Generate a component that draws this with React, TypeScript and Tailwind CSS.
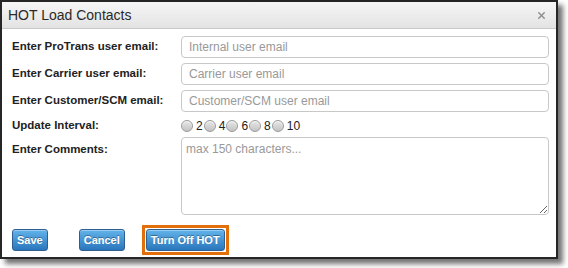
import { X } from "lucide-react";

const font = { fontFamily: '"Liberation Sans", Arial, sans-serif' };

function Field({ label, placeholder }: { label: string; placeholder: string }) {
  return (
    <div className="flex items-center h-[22px] mb-[5px]">
      <label className="w-[169px] shrink-0 text-[11.5px] font-bold text-[#222]">{label}</label>
      <input
        placeholder={placeholder}
        className="flex-1 h-[22px] rounded-[4px] border border-[#c8c8c8] bg-white px-[7px] text-[12px] text-[#333] placeholder:text-[#999] outline-none"
      />
    </div>
  );
}

function BlueButton({ children }: { children: React.ReactNode }) {
  return (
    <button className="h-[22px] px-[4px] rounded-[3px] border border-[#2f5f8e] bg-gradient-to-b from-[#62b3ea] to-[#2a76bd] text-[11px] font-bold text-white [text-shadow:0_-1px_0_rgba(0,0,0,0.35)] shadow-[inset_0_1px_0_rgba(255,255,255,0.35)]">
      {children}
    </button>
  );
}

export default function App() {
  const intervals = ["2", "4", "6", "8", "10"];
  return (
    <div className="w-[568px] h-[268px] bg-white" style={font}>
      <div className="w-[558px] h-[259px] border-2 border-[#262626] bg-white flex flex-col shadow-[5px_5px_5px_rgba(0,0,0,0.55)]">
        {/* title bar */}
        <div className="h-[27px] shrink-0 flex items-center justify-between pl-[6px] pr-[9px] bg-gradient-to-b from-[#f6f6f6] to-[#e3e3e3] border-b border-[#c9c9c9]">
          <span className="text-[14px] text-[#2a2a2a]">HOT Load Contacts</span>
          <X className="w-[11px] h-[11px] text-[#8a8a8a]" strokeWidth={3} />
        </div>

        {/* form */}
        <div className="flex-1 pl-[10px] pr-[7px] pt-[7px]">
          <Field label="Enter ProTrans user email:" placeholder="Internal user email" />
          <Field label="Enter Carrier user email:" placeholder="Carrier user email" />
          <Field label="Enter Customer/SCM email:" placeholder="Customer/SCM user email" />

          <div className="flex items-center h-[17px]">
            <label className="w-[169px] shrink-0 text-[11.5px] font-bold text-[#222]">Update Interval:</label>
            <div className="flex items-center text-[12px] text-[#222]">
              {intervals.map((v) => (
                <span key={v} className="flex items-center mr-[1px]">
                  <span className="w-[12px] h-[12px] rounded-full border border-[#9a9a9a] bg-gradient-to-b from-[#e6e6e6] to-[#c4c4c4] shadow-[inset_0_1px_1px_rgba(255,255,255,0.8)]" />
                  <span className="ml-[3px]">{v}</span>
                </span>
              ))}
            </div>
          </div>

          <div className="flex mt-[3px]">
            <label className="w-[169px] shrink-0 pt-[4px] text-[11.5px] font-bold text-[#222]">Enter Comments:</label>
            <textarea
              placeholder="max 150 characters..."
              className="flex-1 h-[78px] rounded-[4px] border border-[#c8c8c8] px-[4px] py-[2px] text-[12px] placeholder:text-[#999] outline-none"
            />
          </div>

          <div className="flex items-center mt-[10px]">
            <BlueButton>Save</BlueButton>
            <span className="ml-[31px] flex">
              <BlueButton>Cancel</BlueButton>
            </span>
            <span className="ml-[17px] border-[3px] border-[#e36f0b] p-[1px] flex">
              <BlueButton>Turn Off HOT</BlueButton>
            </span>
          </div>
        </div>
      </div>
    </div>
  );
}
